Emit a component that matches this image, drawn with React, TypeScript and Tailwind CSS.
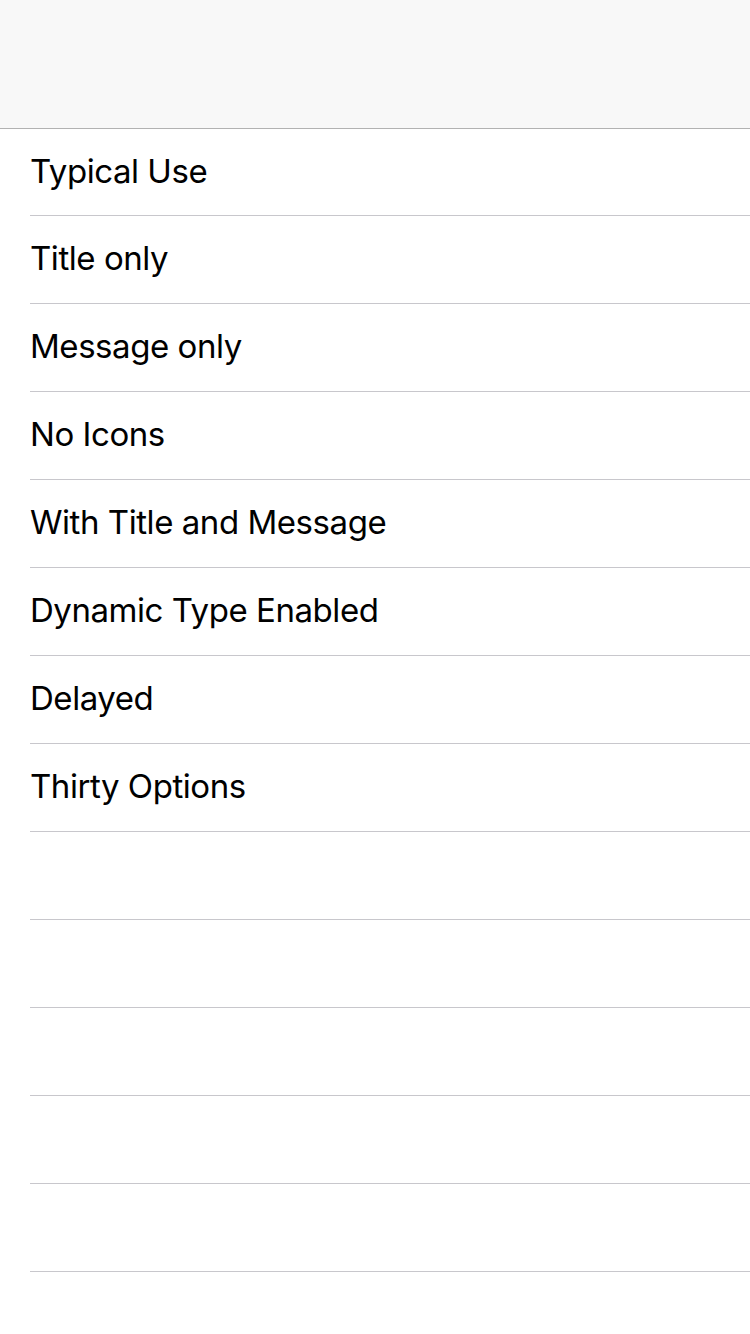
import React from "react";

const items = [
  "Typical Use",
  "Title only",
  "Message only",
  "No Icons",
  "With Title and Message",
  "Dynamic Type Enabled",
  "Delayed",
  "Thirty Options",
  "",
  "",
  "",
  "",
  "",
  "",
  "",
];

export default function App() {
  return (
    <div className="w-[750px] h-[1334px] overflow-hidden bg-white font-['Inter',sans-serif] text-black">
      {/* Nav bar */}
      <header className="h-[129px] bg-[#f8f8f8] border-b border-[#b2b2b2]" />

      {/* Table */}
      <ul>
        {items.map((label, i) => (
          <li key={i} className="pl-[30px]">
            <div
              className={`${i === 0 ? "h-[87px]" : "h-[88px]"} flex items-center border-b border-[#c8c7cc] pb-[1px] text-[33px] tracking-[-0.45px]`}
            >
              {label}
            </div>
          </li>
        ))}
      </ul>
    </div>
  );
}
